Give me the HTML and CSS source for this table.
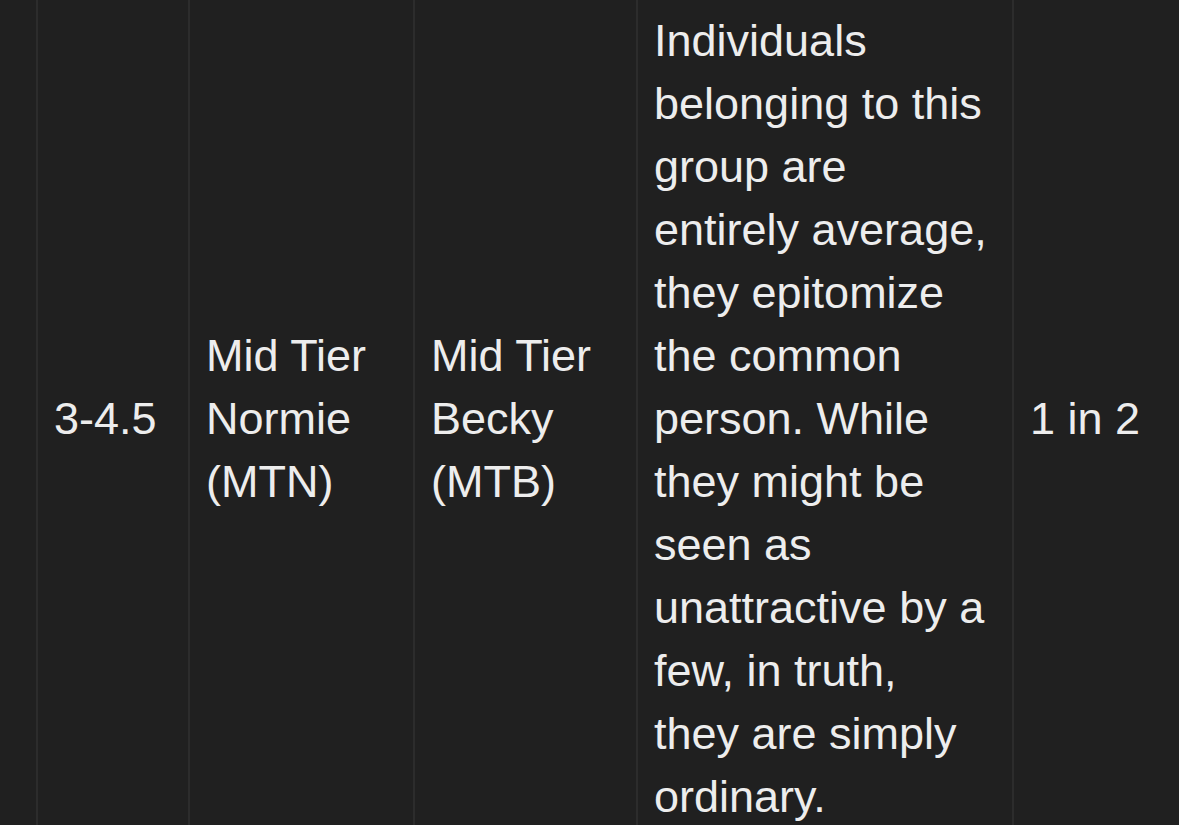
FILE: index.html
```html
<!DOCTYPE html>
<html lang="en">
<head>
<meta charset="utf-8">
<title>Tier table</title>
<link rel="stylesheet" href="styles.css">
</head>
<body>
<div class="wrap">
<table class="tiers">
<colgroup>
<col class="c1"><col class="c2"><col class="c3"><col class="c4"><col class="c5">
</colgroup>
<tbody>
<tr>
<td>3-4.5</td>
<td>Mid Tier Normie (MTN)</td>
<td>Mid Tier Becky (MTB)</td>
<td class="desc">Individuals belonging to this group are entirely average, they epitomize the common person. While they might be seen as unattractive by a few, in truth, they are simply ordinary.</td>
<td>1 in 2</td>
</tr>
</tbody>
</table>
</div>
</body>
</html>
```

FILE: styles.css
```css
html, body {
  margin: 0;
  padding: 0;
  background: #202020;
  overflow: hidden;
  height: 100%;
}
.wrap {
  padding-left: 36px;
}
.tiers {
  table-layout: fixed;
  width: 1176px;
  border-collapse: separate;
  border-spacing: 0;
  font-family: "Liberation Sans", Arial, sans-serif;
  font-size: 45px;
  line-height: 63px;
  color: #ededed;
}
.c1 { width: 152px; }
.c2 { width: 225px; }
.c3 { width: 223px; }
.c4 { width: 376px; }
.c5 { width: 200px; }
.tiers td {
  border-left: 2px solid #2c2c2c;
  padding: 9px 16px 16px 16px;
  vertical-align: middle;
  box-sizing: border-box;
}
.tiers td.desc {
  padding-right: 22px;
}
```
